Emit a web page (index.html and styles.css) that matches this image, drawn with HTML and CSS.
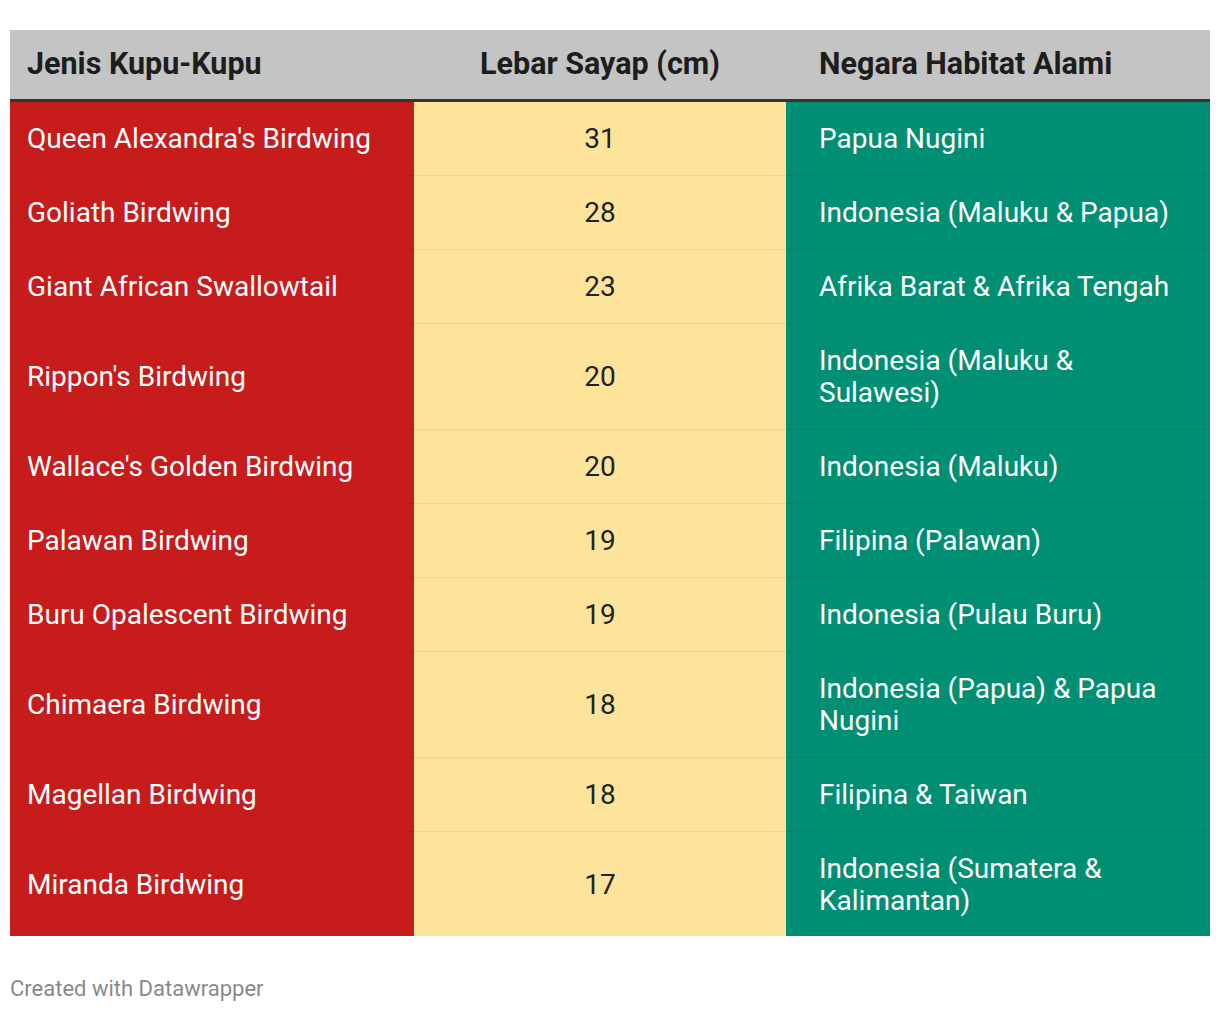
FILE: index.html
```html
<!DOCTYPE html>
<html lang="id">
<head>
<meta charset="utf-8">
<title>Kupu-Kupu Terbesar</title>
<link rel="stylesheet" href="styles.css">
</head>
<body>
<div class="wrap">
  <table class="dw-table">
    <thead>
      <tr>
        <th class="c1">Jenis Kupu-Kupu</th>
        <th class="c2">Lebar Sayap (cm)</th>
        <th class="c3">Negara Habitat Alami</th>
      </tr>
    </thead>
    <tbody>
      <tr><td class="c1">Queen Alexandra's Birdwing</td><td class="c2">31</td><td class="c3">Papua Nugini</td></tr>
      <tr><td class="c1">Goliath Birdwing</td><td class="c2">28</td><td class="c3">Indonesia (Maluku &amp; Papua)</td></tr>
      <tr><td class="c1">Giant African Swallowtail</td><td class="c2">23</td><td class="c3">Afrika Barat &amp; Afrika Tengah</td></tr>
      <tr><td class="c1">Rippon's Birdwing</td><td class="c2">20</td><td class="c3">Indonesia (Maluku &amp; Sulawesi)</td></tr>
      <tr><td class="c1">Wallace's Golden Birdwing</td><td class="c2">20</td><td class="c3">Indonesia (Maluku)</td></tr>
      <tr><td class="c1">Palawan Birdwing</td><td class="c2">19</td><td class="c3">Filipina (Palawan)</td></tr>
      <tr><td class="c1">Buru Opalescent Birdwing</td><td class="c2">19</td><td class="c3">Indonesia (Pulau Buru)</td></tr>
      <tr><td class="c1">Chimaera Birdwing</td><td class="c2">18</td><td class="c3">Indonesia (Papua) &amp; Papua Nugini</td></tr>
      <tr><td class="c1">Magellan Birdwing</td><td class="c2">18</td><td class="c3">Filipina &amp; Taiwan</td></tr>
      <tr class="last"><td class="c1">Miranda Birdwing</td><td class="c2">17</td><td class="c3">Indonesia (Sumatera &amp; Kalimantan)</td></tr>
    </tbody>
  </table>
  <div class="footer">Created with Datawrapper</div>
</div>
</body>
</html>
```
FILE: styles.css
```css
html, body {
  margin: 0;
  padding: 0;
  background: #ffffff;
}
body {
  font-family: Roboto, "Liberation Sans", sans-serif;
}
.wrap {
  padding: 30px 10px 0 10px;
}
.dw-table {
  width: 1200px;
  border-collapse: collapse;
  table-layout: fixed;
}
.dw-table th {
  background: #c4c4c4;
  color: #1d1d1d;
  font-weight: 700;
  font-size: 30.5px;
  line-height: 32px;
  height: 70px;
  padding: 0 17px;
  box-sizing: border-box;
  text-align: left;
  border-bottom: 3px solid #333333;
  vertical-align: middle;
}
.dw-table th.c1 { width: 404px; }
.dw-table th.c2 { width: 372px; text-align: center; }
.dw-table th.c3 { width: 424px; padding-left: 33px; }
.dw-table td {
  font-size: 28px;
  line-height: 32px;
  padding: 21px 17px 20px 17px;
  vertical-align: middle;
  border-bottom: 1px solid rgba(0, 0, 0, 0.06);
}
.dw-table tr.last td {
  border-bottom: 0;
  padding-bottom: 19px;
}
.dw-table td.c1 {
  background: #c71c1c;
  color: #ffffff;
}
.dw-table td.c2 {
  background: #fee49b;
  color: #222222;
  text-align: center;
}
.dw-table td.c3 {
  background: #008f72;
  color: #ffffff;
  padding-left: 33px;
}
.footer {
  margin-top: 40px;
  font-size: 22px;
  color: #8a8a8a;
  line-height: 26px;
}
```
